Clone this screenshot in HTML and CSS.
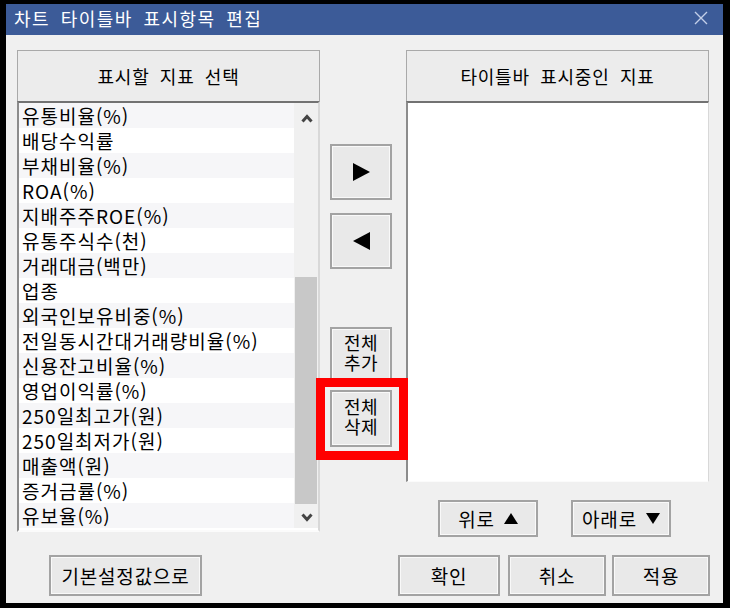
FILE: index.html
```html
<!DOCTYPE html>
<html lang="ko">
<head>
<meta charset="utf-8">
<title>차트 타이틀바 표시항목 편집</title>
<link rel="stylesheet" href="styles.css">
</head>
<body>
<div class="window">
  <div class="titlebar">
    <span class="title">차트 타이틀바 표시항목 편집</span>
    <svg class="close" width="14" height="14" viewBox="0 0 14 14"><path d="M1 1L13 13M13 1L1 13" stroke="#c3cfe8" stroke-width="1.4" fill="none"/></svg>
  </div>
  <div class="content">
    <div class="main">
      <div class="panel">
        <div class="panel-head">표시할 지표 선택</div>
        <div class="listbox">
          <ul class="items">
            <li>유통비율(%)</li>
            <li>배당수익률</li>
            <li>부채비율(%)</li>
            <li>ROA(%)</li>
            <li>지배주주ROE(%)</li>
            <li>유통주식수(천)</li>
            <li>거래대금(백만)</li>
            <li>업종</li>
            <li>외국인보유비중(%)</li>
            <li>전일동시간대거래량비율(%)</li>
            <li>신용잔고비율(%)</li>
            <li>영업이익률(%)</li>
            <li>250일최고가(원)</li>
            <li>250일최저가(원)</li>
            <li>매출액(원)</li>
            <li>증거금률(%)</li>
            <li>유보율(%)</li>
          </ul>
          <div class="scrollbar">
            <div class="sb-up"><svg width="12" height="9" viewBox="0 0 12 9"><path d="M1.5 7.5L6 2.5L10.5 7.5" stroke="#444" stroke-width="3" fill="none"/></svg></div>
            <div class="sb-track"><div class="sb-thumb"></div></div>
            <div class="sb-down"><svg width="12" height="9" viewBox="0 0 12 9"><path d="M1.5 1.5L6 6.5L10.5 1.5" stroke="#444" stroke-width="3" fill="none"/></svg></div>
          </div>
        </div>
      </div>
      <div class="mid">
        <button class="btn move move-add"><svg width="17" height="18" viewBox="0 0 17 18"><polygon points="0,0 17,9 0,18" fill="#000"/></svg></button>
        <button class="btn move move-remove"><svg width="17" height="18" viewBox="0 0 17 18"><polygon points="17,0 0,9 17,18" fill="#000"/></svg></button>
        <button class="btn multi add-all"><span class="line">전체</span><span class="line">추가</span></button>
        <div class="marked">
          <button class="btn multi del-all"><span class="line">전체</span><span class="line">삭제</span></button>
          <span class="highlight"></span>
        </div>
      </div>
      <div class="panel">
        <div class="panel-head">타이틀바 표시중인 지표</div>
        <div class="listbox plain"></div>
        <div class="order-row">
          <button class="btn order"><span>위로</span><svg width="14" height="11" viewBox="0 0 14 11"><polygon points="7,0 14,11 0,11" fill="#000"/></svg></button>
          <button class="btn order"><span>아래로</span><svg width="14" height="11" viewBox="0 0 14 11"><polygon points="0,0 14,0 7,11" fill="#000"/></svg></button>
        </div>
      </div>
    </div>
    <div class="footer">
      <button class="btn foot defaults">기본설정값으로</button>
      <button class="btn foot ok">확인</button>
      <button class="btn foot cancel">취소</button>
      <button class="btn foot apply">적용</button>
    </div>
  </div>
</div>
</body>
</html>
```

FILE: styles.css
```css
* { box-sizing: border-box; }
html, body {
  margin: 0;
  padding: 0;
  background: #000;
}
body {
  width: 730px;
  height: 608px;
  overflow: hidden;
  font-family: "Noto Sans CJK KR", "Noto Sans", sans-serif;
  color: #000;
  word-spacing: 0.28em;
}
.window {
  width: 730px;
  height: 608px;
  border-style: solid;
  border-color: #000;
  border-width: 4px 7px 5px 6px;
  background: #f0f0f0;
  display: flex;
  flex-direction: column;
}
.titlebar {
  height: 31px;
  flex: none;
  background: #3c5b98;
  display: flex;
  align-items: center;
  justify-content: space-between;
  padding: 0 15px 0 8px;
}
.title {
  color: #fff;
  font-size: 18px;
  line-height: 31px;
  letter-spacing: 1.4px;
  margin-top: -3px;
}
.close { display: block; margin-top: -3px; }
.content {
  flex: 1;
  padding: 15px 0 0 11px;
}
.main {
  display: flex;
  align-items: flex-start;
}
.panel {
  width: 303px;
  display: flex;
  flex-direction: column;
}
.panel-head {
  height: 51px;
  border: 1px solid #a9a9a9;
  border-bottom: none;
  background: #ececec;
  font-size: 18px;
  letter-spacing: 0.8px;
  display: flex;
  align-items: center;
  justify-content: center;
}
.listbox {
  height: 431px;
  border-top: 2px solid #727272;
  border-left: 2px solid #8c8c8c;
  border-right: 2px solid #d8d8d8;
  border-bottom: 2px solid #fbfbfb;
  background: #fff;
  display: flex;
  align-items: flex-start;
}
.items {
  list-style: none;
  margin: 0;
  padding: 0;
  flex: 1;
}
.items li {
  height: 25px;
  line-height: 25px;
  padding-left: 3px;
  font-size: 19px;
  letter-spacing: 1px;
  white-space: nowrap;
  background: #f6f6f8;
}
.items li:nth-child(even) { background: #fff; }
.scrollbar {
  width: 24px;
  height: 425px;
  background: #f0f0f0;
  display: flex;
  flex-direction: column;
}
.sb-up, .sb-down {
  height: 24px;
  display: flex;
  justify-content: center;
  align-items: flex-start;
}
.sb-up { padding-top: 11px; padding-left: 1px; }
.sb-down { padding-top: 9px; padding-left: 1px; }
.sb-up svg, .sb-down svg { display: block; }
.sb-track {
  flex: 1;
  display: flex;
  flex-direction: column;
  justify-content: flex-end;
}
.sb-thumb {
  height: 227px;
  margin: 0 1px;
  background: #c8c8c8;
}
.listbox.plain {
  height: 381px;
  border-right-width: 1px;
  border-bottom-width: 1px;
}
.btn {
  font-family: inherit;
  color: #000;
  background: #e9e9e9;
  border: 2px solid #a3a3a3;
  box-shadow: inset 0 0 0 1px #f9f9f9;
  padding: 0;
  margin: 0;
  font-size: 19px;
  line-height: 20px;
  letter-spacing: 0.8px;
  word-spacing: 0.28em;
  display: flex;
  align-items: center;
  justify-content: center;
}
.mid {
  width: 86px;
  padding-left: 10px;
  display: flex;
  flex-direction: column;
}
.move {
  width: 62px;
  height: 56px;
}
.move svg { display: block; }
.move-add { margin-top: 94px; }
.move-remove { margin-top: 13px; }
.multi {
  width: 62px;
  flex-direction: column;
  font-family: "Liberation Sans", "Noto Sans CJK KR", sans-serif;
  font-size: 18px;
  letter-spacing: 0.5px;
  padding-bottom: 1px;
}
.multi .line {
  display: block;
  height: 20px;
  line-height: 20px;
}
.add-all { margin-top: 58px; height: 55px; }
.marked {
  position: relative;
  margin-top: 8px;
  width: 62px;
}
.del-all { height: 57px; }
.highlight {
  position: absolute;
  left: -14px;
  right: -16px;
  top: -12px;
  bottom: -13px;
  border: 9px solid #ff0000;
}
.order-row {
  display: flex;
  margin-top: 18px;
  padding-left: 32px;
  gap: 33px;
}
.order {
  width: 100px;
  height: 37px;
}
.order svg { display: block; margin-left: 9px; }
.footer {
  display: flex;
  margin-top: 18px;
}
.foot { height: 41px; }
.defaults { margin-left: 32px; width: 153px; }
.ok { margin-left: 196px; width: 102px; }
.cancel { margin-left: 8px; width: 98px; }
.apply { margin-left: 6px; width: 98px; }
```
